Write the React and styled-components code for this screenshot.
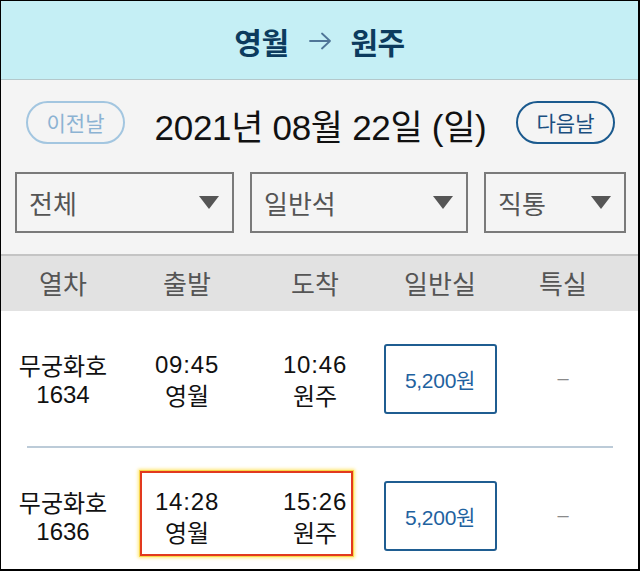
import React from "react";
import styled, { createGlobalStyle } from "styled-components";

const Global = createGlobalStyle`
  html, body { margin: 0; padding: 0; background: #fff; }
  body { font-family: "Liberation Sans", "Noto Sans CJK KR", sans-serif; }
  * { box-sizing: border-box; }
`;

const Frame = styled.div`
  width: 640px;
  height: 571px;
  border-style: solid;
  border-color: #000;
  border-width: 1px 2px 2px 1px;
  overflow: hidden;
  background: #fff;
  display: flex;
  flex-direction: column;
`;

const TitleBar = styled.header`
  height: 79px;
  flex: none;
  background: #c5eff5;
  border-bottom: 1px solid #b4c8cb;
  display: flex;
  align-items: center;
  justify-content: center;
  gap: 20px;
  padding-top: 2px;
`;

const Station = styled.span`
  font-family: "Noto Sans CJK KR", sans-serif;
  font-weight: 700;
  font-size: 30px;
  color: #0c3b5e;
  letter-spacing: -0.5px;
`;

const Controls = styled.section`
  flex: none;
  background: #f4f4f4;
  padding: 21px 12px 21px 14px;
  border-bottom: 2px solid #c4c4c4;
`;

const DateRow = styled.div`
  height: 43px;
  padding: 0 11px;
  display: flex;
  align-items: center;
  justify-content: space-between;
`;

const Pill = styled.button`
  width: 99px;
  height: 43px;
  border-radius: 22px;
  background: transparent;
  border: 2px solid ${(p) => (p.$active ? "#1b5a8e" : "#a3c6e0")};
  color: ${(p) => (p.$active ? "#1b4f80" : "#8cb3d3")};
  font-family: "Noto Sans CJK KR", sans-serif;
  font-size: 21px;
  display: flex;
  align-items: center;
  justify-content: center;
  padding: 0 0 2px;
`;

const DateText = styled.div`
  font-size: 35px;
  color: #111;
  letter-spacing: -0.3px;
  padding-top: 4px;
`;

const SelectRow = styled.div`
  margin-top: 28px;
  display: grid;
  grid-template-columns: 219px 218px 142px;
  gap: 16px;
`;

const Select = styled.div`
  height: 61px;
  border: 2px solid #7a7a7a;
  display: flex;
  align-items: center;
  justify-content: space-between;
  padding: 0 13px 0 12px;
  font-family: "Noto Sans CJK KR", sans-serif;
  font-size: 26px;
  color: #555;
`;

const HeadRow = styled.div`
  flex: none;
  height: 55px;
  background: #e2e2e2;
  display: grid;
  grid-template-columns: 124px 124px 132px 118px 128px;
  align-items: center;
  font-family: "Noto Sans CJK KR", sans-serif;
  font-size: 26px;
  color: #555;
  padding-bottom: 2px;
`;

const HeadCell = styled.div`
  text-align: center;
`;

const Row = styled.div`
  position: relative;
  flex: none;
  height: 135px;
  display: grid;
  grid-template-columns: 124px 124px 132px 118px 128px;
  align-items: center;
  color: #111;
`;

const Divider = styled.div`
  flex: none;
  height: 2px;
  margin: 0 25px 0 26px;
  background: #bccbd8;
`;

const Cell = styled.div`
  display: flex;
  flex-direction: column;
  align-items: center;
  line-height: 30px;
  padding-top: 3px;
`;

const Line = styled.span`
  font-family: ${(p) => (p.$kr ? '"Noto Sans CJK KR", sans-serif' : '"Liberation Sans", "Noto Sans CJK KR", sans-serif')};
  font-size: 24px;
  letter-spacing: ${(p) => (p.$time ? "0.8px" : "0")};
`;

const Price = styled.button`
  justify-self: center;
  width: 113px;
  height: 70px;
  background: #fff;
  border: 2px solid #1f5d91;
  border-radius: 3px;
  color: #1f62a0;
  font-family: "Liberation Sans", "Noto Sans CJK KR", sans-serif;
  font-size: 21px;
  letter-spacing: -0.3px;
  padding: 0;
`;

const Dash = styled.div`
  text-align: center;
  color: #8a8a8a;
  font-size: 20px;
`;

const Highlight = styled.div`
  position: absolute;
  left: 139px;
  top: 23px;
  width: 213px;
  height: 85px;
  border: 2px solid #e2391e;
  box-shadow: 0 0 0 1px #f7d64a, 0 0 3px 2px rgba(255, 226, 90, 0.8);
  pointer-events: none;
`;

const Arrow = () => (
  <svg width="22" height="18" viewBox="0 0 22 18" fill="none" stroke="#4f7597" strokeWidth="1.8" strokeLinecap="round" strokeLinejoin="round">
    <path d="M1 9 H21 M13 1.5 L21 9 L13 16.5" />
  </svg>
);

const Caret = () => (
  <svg width="20" height="13" viewBox="0 0 20 13">
    <polygon points="0,0 20,0 10,13" fill="#555" />
  </svg>
);

const trains = [
  { name: "무궁화호", no: "1634", dep: "09:45", arr: "10:46", price: "5,200원" },
  { name: "무궁화호", no: "1636", dep: "14:28", arr: "15:26", price: "5,200원", mark: true },
];

export default function App() {
  return (
    <>
      <Global />
      <Frame>
        <TitleBar>
          <Station>영월</Station>
          <Arrow />
          <Station>원주</Station>
        </TitleBar>
        <Controls>
          <DateRow>
            <Pill>이전날</Pill>
            <DateText>2021년 08월 22일 (일)</DateText>
            <Pill $active>다음날</Pill>
          </DateRow>
          <SelectRow>
            <Select>
              <span>전체</span>
              <Caret />
            </Select>
            <Select>
              <span>일반석</span>
              <Caret />
            </Select>
            <Select>
              <span>직통</span>
              <Caret />
            </Select>
          </SelectRow>
        </Controls>
        <HeadRow>
          <HeadCell>열차</HeadCell>
          <HeadCell>출발</HeadCell>
          <HeadCell>도착</HeadCell>
          <HeadCell>일반실</HeadCell>
          <HeadCell>특실</HeadCell>
        </HeadRow>
        {trains.map((t, i) => (
          <React.Fragment key={t.no}>
            {i > 0 && <Divider />}
            <Row>
              <Cell>
                <Line $kr>{t.name}</Line>
                <Line>{t.no}</Line>
              </Cell>
              <Cell>
                <Line $time>{t.dep}</Line>
                <Line $kr>영월</Line>
              </Cell>
              <Cell>
                <Line $time>{t.arr}</Line>
                <Line $kr>원주</Line>
              </Cell>
              <Price>{t.price}</Price>
              <Dash>–</Dash>
              {t.mark && <Highlight />}
            </Row>
          </React.Fragment>
        ))}
      </Frame>
    </>
  );
}
